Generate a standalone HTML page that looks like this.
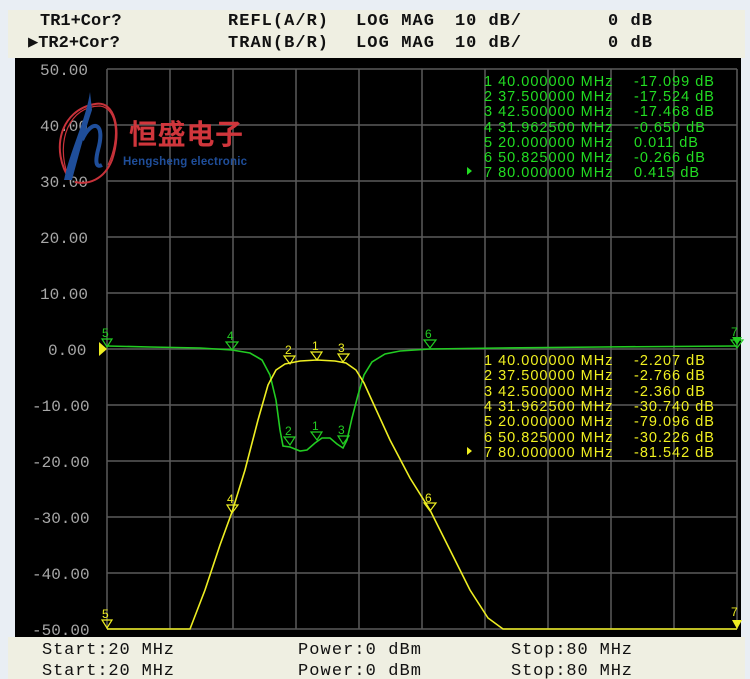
<!DOCTYPE html>
<html><head><meta charset="utf-8"><style>
html,body{margin:0;padding:0;background:#e9eef4;}
svg{display:block}
.h{font-family:"Liberation Mono",monospace;font-weight:bold;font-size:17px;fill:#111}
.ax{font-family:"Liberation Mono",monospace;font-size:16px;fill:#a8a8a8}
.g{font-family:"Liberation Sans",sans-serif;font-size:14.5px;fill:#22dd22;letter-spacing:1px}
.y{font-family:"Liberation Sans",sans-serif;font-size:14.5px;fill:#f0f020;letter-spacing:1px}
.mk{font-family:"Liberation Sans",sans-serif;font-size:12px}
</style></head><body>
<svg width="750" height="679" viewBox="0 0 750 679" xmlns="http://www.w3.org/2000/svg">
<rect x="0" y="0" width="750" height="679" fill="#e9eef4"/>
<rect x="8" y="10" width="737" height="48" fill="#efefe2"/>
<rect x="8" y="637" width="737" height="42" fill="#efefe2"/>
<rect x="15" y="58" width="726" height="579" fill="#000"/>
<text class="h" x="40" y="25">TR1+Cor?</text>
<text class="h" x="228" y="25" textLength="100">REFL(A/R)</text>
<text class="h" x="356" y="25" textLength="78">LOG MAG</text>
<text class="h" x="455" y="25" textLength="66">10 dB/</text>
<text class="h" x="608" y="25" textLength="44">0 dB</text>
<text class="h" x="28" y="47">▶TR2+Cor?</text>
<text class="h" x="228" y="47" textLength="100">TRAN(B/R)</text>
<text class="h" x="356" y="47" textLength="78">LOG MAG</text>
<text class="h" x="455" y="47" textLength="66">10 dB/</text>
<text class="h" x="608" y="47" textLength="44">0 dB</text>
<g stroke="#5a5a5a" stroke-width="1.5">
<line x1="107" y1="69" x2="107" y2="629"/><line x1="170" y1="69" x2="170" y2="629"/><line x1="233" y1="69" x2="233" y2="629"/><line x1="296" y1="69" x2="296" y2="629"/><line x1="359" y1="69" x2="359" y2="629"/><line x1="422" y1="69" x2="422" y2="629"/><line x1="485" y1="69" x2="485" y2="629"/><line x1="548" y1="69" x2="548" y2="629"/><line x1="611" y1="69" x2="611" y2="629"/><line x1="674" y1="69" x2="674" y2="629"/><line x1="737" y1="69" x2="737" y2="629"/>
<line x1="107" y1="69" x2="737" y2="69"/><line x1="107" y1="125" x2="737" y2="125"/><line x1="107" y1="181" x2="737" y2="181"/><line x1="107" y1="237" x2="737" y2="237"/><line x1="107" y1="293" x2="737" y2="293"/><line x1="107" y1="349" x2="737" y2="349"/><line x1="107" y1="405" x2="737" y2="405"/><line x1="107" y1="461" x2="737" y2="461"/><line x1="107" y1="517" x2="737" y2="517"/><line x1="107" y1="573" x2="737" y2="573"/><line x1="107" y1="629" x2="737" y2="629"/>
</g>
<g class="ax">
<text x="40" y="75">50.00</text><text x="40" y="131">40.00</text><text x="40" y="187">30.00</text><text x="40" y="243">20.00</text><text x="40" y="299">10.00</text><text x="48" y="355">0.00</text><text x="32" y="411">-10.00</text><text x="32" y="467">-20.00</text><text x="32" y="523">-30.00</text><text x="32" y="579">-40.00</text><text x="32" y="635">-50.00</text>
</g>
<g>
<path d="M70 180 C50 150 60 110 95 104 C115 100 122 130 112 160 C104 180 88 185 75 182" fill="none" stroke="#c8323a" stroke-width="2"/>
<path d="M68 176 C55 140 70 106 100 106 C118 108 120 140 108 165" fill="none" stroke="#c8323a" stroke-width="1.2"/>
<path d="M90 92 C86 120 70 150 64 180 L72 180 C80 150 86 128 92 110 Z" fill="#1f4e9a"/>
<path d="M82 140 C92 118 106 122 98 150 C95 162 96 168 102 165" fill="none" stroke="#1f4e9a" stroke-width="4"/>
<text x="129" y="144" font-family="Noto Sans CJK SC, sans-serif" font-weight="bold" font-size="28" fill="#d0363c" textLength="114">恒盛电子</text>
<text x="123" y="165" font-family="Liberation Sans, sans-serif" font-weight="bold" font-size="11.5" fill="#1f4e9a" textLength="124">Hengsheng electronic</text>
</g>
<polyline fill="none" stroke="#22cc22" stroke-width="1.6" points="107,346 150,347 200,348 232,350 250,353 262,360 270,375 276,400 280,430 283,446 290,447 300,451 307,450 315,443 322,438 330,438 337,444 343,448 347,440 352,418 358,395 364,375 372,362 385,354 400,351 430,349 500,348 600,347 737,346"/>
<polyline fill="none" stroke="#eeee22" stroke-width="1.6" points="107,629 190,629 205,590 220,545 232,512 245,470 258,420 268,385 276,370 285,364 300,361 317,360 335,361 346,363 356,370 364,383 374,405 390,440 410,478 430,510 450,550 470,590 488,618 503,629 737,629"/>
<g fill="none" stroke="#22cc22" stroke-width="1.2">
<path d="M102,339 L112,339 L107,347 Z"/><path d="M226,342 L238,342 L232,350 Z"/><path d="M424,340 L436,340 L430,348 Z"/>
<path d="M284,437 L295,437 L290,445 Z"/><path d="M311,432 L322,432 L317,440 Z"/><path d="M338,436 L349,436 L343,444 Z"/>
<path d="M731,340 L743,340 L737,348 Z"/>
</g>
<g class="mk" fill="#22cc22">
<text x="102" y="337">5</text><text x="227" y="340">4</text><text x="425" y="338">6</text><text x="285" y="435">2</text><text x="312" y="430">1</text><text x="338" y="434">3</text><text x="731" y="336">7</text>
</g>
<g fill="none" stroke="#eeee22" stroke-width="1.2">
<path d="M284,356 L295,356 L290,364 Z"/><path d="M311,352 L322,352 L317,360 Z"/><path d="M338,354 L349,354 L343,362 Z"/>
<path d="M227,505 L238,505 L232,513 Z"/><path d="M424,503 L436,503 L430,511 Z"/><path d="M102,620 L112,620 L107,628 Z"/>
</g>
<g class="mk" fill="#eeee22">
<text x="285" y="354">2</text><text x="312" y="350">1</text><text x="338" y="352">3</text><text x="227" y="503">4</text><text x="425" y="502">6</text><text x="102" y="618">5</text><text x="731" y="616">7</text>
</g>
<path d="M732,620 L742,620 L737,629 Z" fill="#eeee22"/>
<path d="M732,337 L742,337 L737,345 Z" fill="#22cc22"/>
<path d="M99,342 L107,349 L99,356 Z" fill="#eeee22"/>
<g class="g">
<text x="484" y="86">1 40.000000 MHz</text><text x="634" y="86">-17.099 dB</text>
<text x="484" y="101">2 37.500000 MHz</text><text x="634" y="101">-17.524 dB</text>
<text x="484" y="116">3 42.500000 MHz</text><text x="634" y="116">-17.468 dB</text>
<text x="484" y="132">4 31.962500 MHz</text><text x="634" y="132">-0.650 dB</text>
<text x="484" y="147">5 20.000000 MHz</text><text x="634" y="147">0.011 dB</text>
<text x="484" y="162">6 50.825000 MHz</text><text x="634" y="162">-0.266 dB</text>
<text x="484" y="177">7 80.000000 MHz</text><text x="634" y="177">0.415 dB</text>
</g>
<path d="M467,167 L472,171 L467,175 Z" fill="#22dd22"/>
<g class="y">
<text x="484" y="365">1 40.000000 MHz</text><text x="634" y="365">-2.207 dB</text>
<text x="484" y="380">2 37.500000 MHz</text><text x="634" y="380">-2.766 dB</text>
<text x="484" y="396">3 42.500000 MHz</text><text x="634" y="396">-2.360 dB</text>
<text x="484" y="411">4 31.962500 MHz</text><text x="634" y="411">-30.740 dB</text>
<text x="484" y="426">5 20.000000 MHz</text><text x="634" y="426">-79.096 dB</text>
<text x="484" y="442">6 50.825000 MHz</text><text x="634" y="442">-30.226 dB</text>
<text x="484" y="457">7 80.000000 MHz</text><text x="634" y="457">-81.542 dB</text>
</g>
<path d="M467,447 L472,451 L467,455 Z" fill="#f0f020"/>
<g class="h" style="font-weight:normal">
<text x="42" y="654" textLength="132">Start:20 MHz</text><text x="298" y="654" textLength="123">Power:0 dBm</text><text x="511" y="654" textLength="121">Stop:80 MHz</text>
<text x="42" y="675" textLength="132">Start:20 MHz</text><text x="298" y="675" textLength="123">Power:0 dBm</text><text x="511" y="675" textLength="121">Stop:80 MHz</text>
</g>
</svg>
</body></html>
